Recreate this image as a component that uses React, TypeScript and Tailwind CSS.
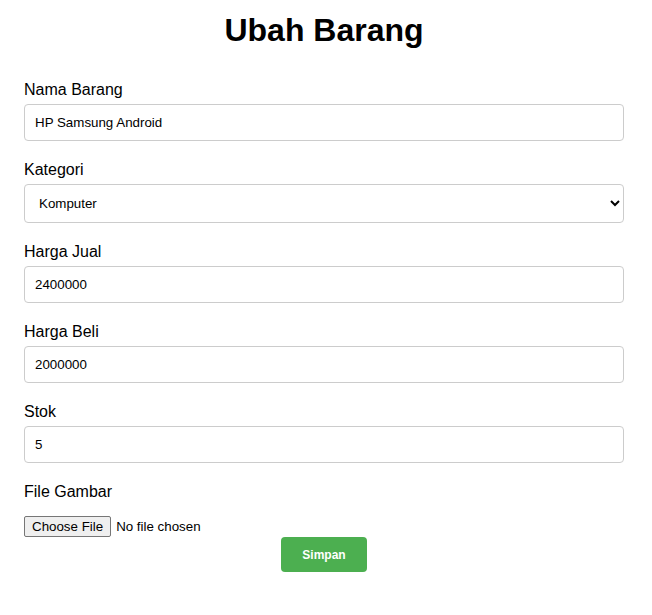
import React from "react";

const inputCls =
  "block w-full h-[37px] px-[10px] border border-[#cccccc] rounded-[4px] bg-white text-[13.33px] text-black outline-none";

function Field({ label, children, mb = "mb-[20px]" }: { label: string; children: React.ReactNode; mb?: string }) {
  return (
    <div className={mb}>
      <label className="block text-[16px] leading-[18px] mb-[5px] text-black">{label}</label>
      {children}
    </div>
  );
}

export default function App() {
  return (
    <div className="bg-white min-h-[615px] w-[652px]" style={{ fontFamily: '"Liberation Sans", Arial, sans-serif' }}>
      <div className="w-[600px] ml-[24px] pt-[12px]">
        <h1 className="text-[32px] leading-[37px] font-bold text-center text-black mb-[32px]">Ubah Barang</h1>
        <form onSubmit={(e) => e.preventDefault()}>
          <Field label="Nama Barang">
            <input className={inputCls} defaultValue="HP Samsung Android" />
          </Field>
          <Field label="Kategori">
            <select
              className="block w-full h-[39px] px-[10px] border border-[#cccccc] rounded-[4px] bg-white text-[13.33px] text-black outline-none"
              defaultValue="Komputer"
            >
              <option>Komputer</option>
              <option>Handphone</option>
            </select>
          </Field>
          <Field label="Harga Jual">
            <input className={inputCls} defaultValue="2400000" />
          </Field>
          <Field label="Harga Beli">
            <input className={inputCls} defaultValue="2000000" />
          </Field>
          <Field label="Stok">
            <input className={inputCls} defaultValue="5" />
          </Field>
          <div>
            <label className="block text-[16px] leading-[18px] mb-[15px] text-black">File Gambar</label>
            <input
              type="file"
              className="block h-[21px] text-[13.33px] leading-[15px] text-black file:h-[21px] file:bg-[#efefef] file:border file:border-solid file:border-[#767676] file:rounded-[2px] file:px-[7px] file:py-0 file:mr-[5px] file:text-black"
            />
          </div>
          <div className="flex justify-center">
            <button
              type="submit"
              className="w-[86px] h-[35px] bg-[#4caf50] text-white text-[12px] font-bold rounded-[4px]"
            >
              Simpan
            </button>
          </div>
        </form>
      </div>
    </div>
  );
}
